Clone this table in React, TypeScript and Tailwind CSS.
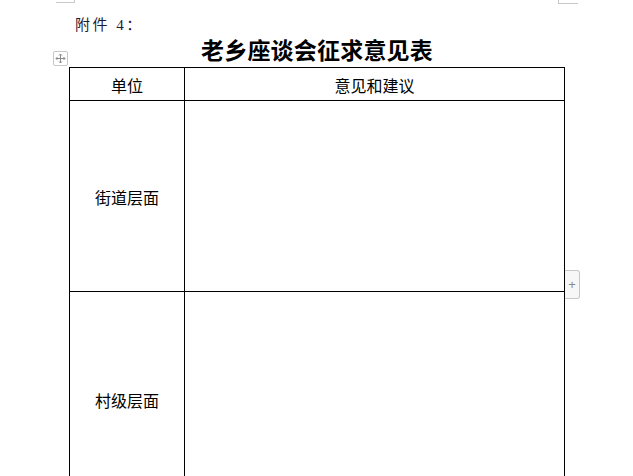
import React from "react";

export default function App() {
  return (
    <div className="relative w-[633px] h-[476px] overflow-hidden bg-white">
      {/* page corner marks */}
      <div className="absolute left-[56px] top-0 w-[19px] h-[3px] border-b border-r border-[#c8c8c8]" />
      <div className="absolute left-[558px] top-0 w-[20px] h-[4px] border-b border-l border-[#c8c8c8]" />

      {/* table move handle */}
      <div className="absolute left-[53px] top-[51px] w-[15px] h-[15px] border border-[#c8c8c8] rounded-[2px] bg-white flex items-center justify-center">
        <svg width="11" height="11" viewBox="0 0 11 11" fill="none" stroke="#8a8a8a" strokeWidth="1">
          <path d="M5.5 1v9M1 5.5h9" />
          <path d="M4 2.5l1.5-1.5 1.5 1.5M4 8.5l1.5 1.5 1.5-1.5M2.5 4L1 5.5 2.5 7M8.5 4L10 5.5 8.5 7" />
        </svg>
      </div>

      {/* row insert handle */}
      <div className="absolute left-[565px] top-[270px] w-[15px] h-[29px] border border-l-0 border-[#c8c8c8] rounded-r-[3px] bg-[#f7f7f7] flex items-center justify-center text-[#8a8a8a] text-[13px] leading-none" style={{ fontFamily: '"Liberation Sans", sans-serif' }}>
        +
      </div>

      <div className="pl-[69px] pt-[14px]">
        <div
          className="ml-[6px] h-[22px] text-[15px] leading-[22px] text-[#1c1c3a] tracking-[2.5px]"
          style={{ fontFamily: '"Liberation Serif", "Noto Sans CJK SC", serif' }}
        >
          附件 4：
        </div>
        <div
          className="w-[496px] mt-[1px] h-[30px] text-center text-[23px] leading-[30px] font-bold text-black tracking-[0.2px]"
          style={{ fontFamily: '"Liberation Serif", "Noto Sans CJK SC", serif' }}
        >
          老乡座谈会征求意见表
        </div>
        <div
          className="w-[496px] border border-black text-[16px] text-black"
          style={{ fontFamily: '"Liberation Sans", "Noto Sans CJK SC", sans-serif' }}
        >
          <div className="flex h-[33px] border-b border-black">
            <div className="w-[115px] border-r border-black flex items-center justify-center pt-[6px]">单位</div>
            <div className="flex-1 flex items-center justify-center pt-[6px]">意见和建议</div>
          </div>
          <div className="flex h-[191px] border-b border-black">
            <div className="w-[115px] border-r border-black flex items-center justify-center pt-[6px]">街道层面</div>
            <div className="flex-1" />
          </div>
          <div className="flex h-[220px]">
            <div className="w-[115px] border-r border-black flex items-center justify-center">
              <span className="mt-[-1px]">村级层面</span>
            </div>
            <div className="flex-1" />
          </div>
        </div>
      </div>
    </div>
  );
}
